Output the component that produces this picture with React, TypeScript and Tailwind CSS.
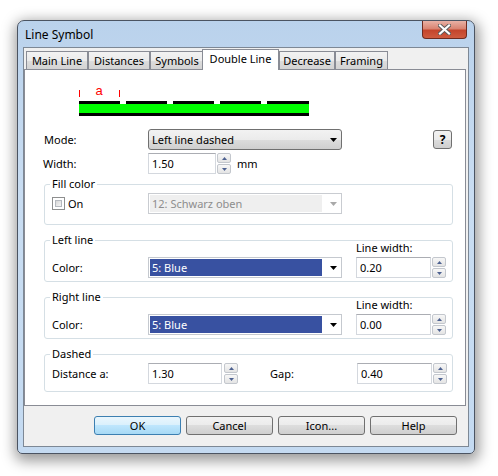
import React from 'react';

type Tab = { label: string; cls: string; active?: boolean };

const tabs: Tab[] = [
  { label: 'Main Line', cls: 'w-[62px]' },
  { label: 'Distances', cls: 'w-[62px]' },
  { label: 'Symbols', cls: 'w-[54px]' },
  { label: 'Double Line', cls: 'w-[77px] -ml-[2px]', active: true },
  { label: 'Decrease', cls: 'w-[56px]' },
  { label: 'Framing', cls: 'w-[53px]' },
];

const Caret = ({ color = '#000' }: { color?: string }) => (
  <svg width="7" height="4" viewBox="0 0 7 4">
    <path d="M0 0h7L3.5 4z" fill={color} />
  </svg>
);

const SpinHalf = ({ up }: { up?: boolean }) => (
  <div className="h-[10px] w-[14px] border border-[#c3c7cd] rounded-[2px] bg-[linear-gradient(#f7f7f7,#e4e4e4)] flex items-center justify-center">
    <svg width="5" height="3" viewBox="0 0 5 3">
      <path d={up ? 'M0 3h5L2.5 0z' : 'M0 0h5L2.5 3z'} fill="#4d6190" />
    </svg>
  </div>
);

const Spinner = ({ cls = 'ml-[1px]' }: { cls?: string }) => (
  <div className={`flex flex-col justify-between h-[21px] ${cls}`}>
    <SpinHalf up />
    <SpinHalf />
  </div>
);

const TextBox = ({ value, cls }: { value: string; cls: string }) => (
  <div className={`h-[21px] border border-[#d4d8de] border-t-[#abadb3] bg-white flex items-center pl-[3px] ${cls}`}>
    {value}
  </div>
);

const BlueCombo = () => (
  <div className="w-[194px] h-[21px] border border-[#c5c9cf] bg-white flex items-center">
    <div className="ml-[1px] w-[172px] h-[17px] bg-[#3851a1] text-white flex items-center pl-[2px]">5: Blue</div>
    <div className="ml-[8px]">
      <Caret />
    </div>
  </div>
);

const GroupBox = ({ title, cls, children }: { title: string; cls: string; children: React.ReactNode }) => (
  <div className={`relative w-[409px] border border-[#d5dfe5] rounded-[3px] ${cls}`}>
    <span className="absolute -top-[8px] left-[5px] px-[2px] bg-white">{title}</span>
    {children}
  </div>
);

const LineGroup = ({ title, width }: { title: string; width: string }) => (
  <GroupBox title={title} cls="mt-[15px] h-[42px] pl-[7px] pb-[3px] flex items-end">
    <span className="w-[96px] self-end mb-[3px]">Color:</span>
    <BlueCombo />
    <div className="ml-[14px] flex flex-col">
      <span className="mb-[2px]">Line width:</span>
      <div className="flex">
        <TextBox value={width} cls="w-[75px]" />
        <Spinner />
      </div>
    </div>
  </GroupBox>
);

const DialogButton = ({ label, primary }: { label: string; primary?: boolean }) => (
  <div
    className={
      primary
        ? 'w-[87px] h-[19px] rounded-[3px] border border-[#3c7fb1] bg-[linear-gradient(#eaf6fd,#d9f0fc_50%,#bee6fd_50%,#a7d9f5)] flex items-center justify-center'
        : 'w-[87px] h-[19px] rounded-[3px] border border-[#707070] bg-[linear-gradient(#f2f2f2,#ebebeb_50%,#dddddd_50%,#cfcfcf)] flex items-center justify-center'
    }
  >
    {label}
  </div>
);

// dashed double line preview with the "a" distance marker
const Preview = () => {
  const dashes = [0, 47, 94, 141, 188];
  return (
    <svg width="231" height="35" viewBox="0 0 231 35" className="ml-[35px] mt-[12px]">
      <rect x="0" y="8" width="1" height="7" fill="#ff0000" />
      <rect x="40" y="8" width="1" height="7" fill="#ff0000" />
      <text x="20" y="13" fontSize="13" fill="#ff0000" textAnchor="middle" fontFamily="Liberation Sans, sans-serif">
        a
      </text>
      {dashes.map((x, i) => (
        <rect key={i} x={x} y="19" width={i === 4 ? 42 : 41} height="3" fill="#000" />
      ))}
      <rect x="0" y="22" width="230" height="9" fill="#00ff00" />
      <rect x="0" y="31" width="230" height="3" fill="#000" />
    </svg>
  );
};

export default function App() {
  return (
    <div className="min-h-screen bg-white pt-[20px] pl-[17px] font-['Noto_Sans',sans-serif] text-[11px] leading-[14px] text-black">
      <div className="w-[458px] h-[434px] rounded-t-[7px] rounded-b-[5px] border border-[#4b5462] bg-[linear-gradient(#bad2ec,#c9ddf2_40%,#c4daf1)] shadow-[1px_4px_14px_3px_rgba(0,0,0,0.4)] flex flex-col px-[5px]">
        {/* title bar */}
        <div className="h-[26px] flex justify-between">
          <span className="self-center pl-[2px] pt-[2px] text-[12px]">Line Symbol</span>
          <div className="mr-[2px] w-[45px] h-[18px] rounded-b-[4px] border border-t-0 border-[#6e2b20] bg-[linear-gradient(#e9b1a5,#d98472_45%,#c4452c_55%,#cf5b3f)] flex items-center justify-center">
            <svg width="13" height="11" viewBox="0 0 13 11">
              <path d="M2 1.5l9 8M11 1.5l-9 8" stroke="#5a5a5a" strokeWidth="4" strokeLinecap="square" />
              <path d="M2 1.5l9 8M11 1.5l-9 8" stroke="#ffffff" strokeWidth="2.2" strokeLinecap="square" />
            </svg>
          </div>
        </div>

        {/* client area */}
        <div className="w-[446px] h-[400px] border border-[#7d8895] bg-[#f0f0f0] flex flex-col">
          <div className="flex items-end h-[20px] mt-[1px] pl-[2px]">
            {tabs.map((t) =>
              t.active ? (
                <div
                  key={t.label}
                  className={`relative z-10 h-[21px] -mb-[1px] border border-b-0 border-[#898c95] bg-white flex justify-center pt-[2px] ${t.cls}`}
                >
                  {t.label}
                </div>
              ) : (
                <div
                  key={t.label}
                  className={`h-[18px] border border-b-0 border-[#898c95] bg-[linear-gradient(#f2f2f2,#ebebeb_50%,#dddddd_50%,#d3d3d3)] flex justify-center pt-[2px] ${t.cls}`}
                >
                  {t.label}
                </div>
              )
            )}
          </div>

          {/* tab page */}
          <div className="w-[442px] h-[337px] border border-[#898c95] bg-white flex flex-col pl-[19px]">
            <Preview />

            <div className="mt-[12px] flex items-center">
              <span className="w-[104px]">Mode:</span>
              <div className="w-[194px] h-[21px] rounded-[3px] border border-[#707070] bg-[linear-gradient(#f2f2f2,#ebebeb_50%,#dddddd_50%,#cfcfcf)] flex items-center justify-between pl-[3px] pr-[4px]">
                <span>Left line dashed</span>
                <Caret />
              </div>
              <div className="ml-[91px] w-[19px] h-[19px] rounded-[3px] border border-[#707070] bg-[linear-gradient(#f2f2f2,#ebebeb_50%,#dddddd_50%,#cfcfcf)] flex items-center justify-center font-bold text-[12px]">
                ?
              </div>
            </div>

            <div className="mt-[3px] flex items-center">
              <span className="w-[104px] -ml-[1px]">Width:</span>
              <TextBox value="1.50" cls="w-[68px] ml-[1px]" />
              <Spinner />
              <span className="ml-[6px]">mm</span>
            </div>

            <GroupBox title="Fill color" cls="mt-[10px] h-[41px] pl-[7px] pt-[8px]">
              <div className="flex items-center h-[21px]">
                <div className="w-[96px] flex items-center">
                  <div className="w-[13px] h-[13px] border border-[#8e8f8f] bg-white p-[2px]">
                    <div className="w-full h-full border border-[#b5b9bf] bg-[linear-gradient(135deg,#d6d6d6,#f5f5f5)]" />
                  </div>
                  <span className="ml-[3px]">On</span>
                </div>
                <div className="w-[194px] h-[21px] border border-[#c9ccd1] bg-white flex items-center">
                  <div className="ml-[1px] w-[172px] h-[17px] bg-[#efefef] text-[#8d8d8d] flex items-center pl-[2px]">
                    12: Schwarz oben
                  </div>
                  <div className="ml-[8px]">
                    <Caret color="#a9a9a9" />
                  </div>
                </div>
              </div>
            </GroupBox>

            <LineGroup title="Left line" width="0.20" />
            <LineGroup title="Right line" width="0.00" />

            <GroupBox title="Dashed" cls="mt-[15px] h-[38px] pl-[7px] pt-[8px]">
              <div className="flex items-center">
                <span className="w-[96px]">Distance a:</span>
                <TextBox value="1.30" cls="w-[74px]" />
                <Spinner cls="ml-[2px]" />
                <span className="ml-[32px] w-[87px]">Gap:</span>
                <TextBox value="0.40" cls="w-[75px]" />
                <Spinner />
              </div>
            </GroupBox>
          </div>

          <div className="mt-[10px] flex justify-end gap-[5px] pr-[11px]">
            <DialogButton label="OK" primary />
            <DialogButton label="Cancel" />
            <DialogButton label="Icon..." />
            <DialogButton label="Help" />
          </div>
        </div>
      </div>
    </div>
  );
}
